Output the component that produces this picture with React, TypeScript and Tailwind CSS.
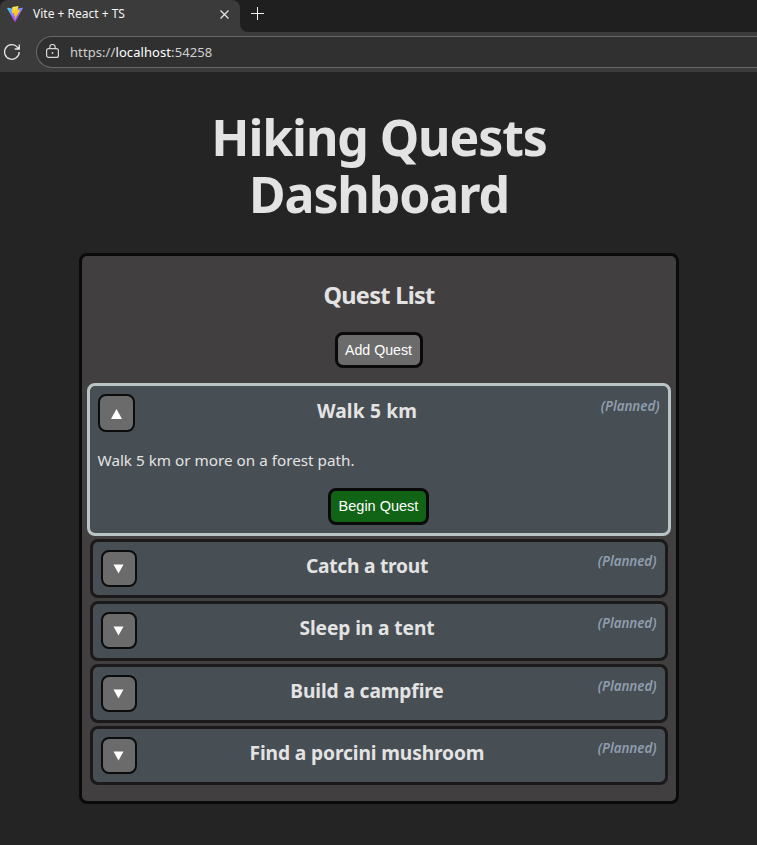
import React from "react";

const quests = [
  { title: "Catch a trout", style: "tracking-[-0.25px]", height: "h-[59px]" },
  { title: "Sleep in a tent", style: "tracking-[-0.1px]", height: "h-[60px]" },
  { title: "Build a campfire", style: "tracking-[-0.12px]", height: "h-[59px]" },
  { title: "Find a porcini mushroom", style: "tracking-[-0.12px]", height: "h-[59px]" },
];

function ViteLogo() {
  return (
    <svg className="ml-[7px] h-4 w-4 shrink-0" viewBox="0 0 32 32">
      <defs>
        <linearGradient id="shield" x1="0" y1="0" x2="0.6" y2="1">
          <stop offset="0" stopColor="#41d1ff" />
          <stop offset="1" stopColor="#bd34fe" />
        </linearGradient>
        <linearGradient id="bolt" x1="0.4" y1="0" x2="0.6" y2="1">
          <stop offset="0" stopColor="#ffea83" />
          <stop offset="0.1" stopColor="#ffdd35" />
          <stop offset="1" stopColor="#ffa800" />
        </linearGradient>
      </defs>
      <path fill="url(#shield)" d="M31.6 4.9 16.9 31.2a1 1 0 0 1-1.7 0L.4 4.9c-.4-.8.3-1.6 1.1-1.4L16 6.1l14.5-2.6c.8-.2 1.5.6 1.1 1.4Z" />
      <path fill="url(#bolt)" d="M22.4.2 11 2.200a.4.4 0 0 0-.4.4L10 14.400c0 .3.200.5.500.4l3.500-.7c.3 0 .5.200.5.500l-.9 4.300c-.1.3.2.5.5.4l2-.5c.3-.1.5.200.500.500l-1.600 7.600c-.1.400.5.600.7.300L26 8c.100-.300-.1-.6-.4-.600l-4.100.600c-.300 0-.5-.200-.4-.500l1.900-6.800c.1-.300-.2-.5-.6-.5Z" />
    </svg>
  );
}

function Toggle({ open = false }: { open?: boolean }) {
  return (
    <button
      className={
        open
          ? "flex h-[38px] w-[37px] items-center justify-center rounded-[8px] border-2 border-[#0c0c0c] bg-[#6b6b6b]"
          : "flex h-[37px] w-9 items-center justify-center rounded-[8px] border-2 border-[#0c0c0c] bg-[#6b6b6b]"
      }
    >
      <svg className="mt-px h-[10px] w-[11px]" viewBox="0 0 11 10">
        <path fill="#fff" d={open ? "M5.5 0 11 10H0Z" : "M.5 .5h10L5.500 9.500Z"} />
      </svg>
    </button>
  );
}

function Status() {
  return (
    <span className="w-[60px] text-right text-[13.4px] leading-[18px] font-semibold tracking-[-0.04px] whitespace-nowrap text-[#8f9dae] italic">
      (Planned)
    </span>
  );
}

export default function App() {
  return (
    <div className="flex h-[845px] w-full flex-col overflow-hidden bg-[#242424] font-['Noto_Sans',sans-serif] text-[#e3e3e3]">
      <header className="flex h-[72px] shrink-0 flex-col bg-[#3b3b3b]">
        <div className="flex h-8 bg-[#1f1f1f]">
          <div className="flex h-8 w-[240px] items-center rounded-t-lg bg-[#3b3b3b] pb-1 text-[12px] text-[#f4f4f4]">
            <ViteLogo />
            <span className="ml-[10px] whitespace-nowrap">Vite + React + TS</span>
            <svg className="mr-[11px] ml-auto h-[9px] w-[9px]" viewBox="0 0 9 9" fill="none" stroke="#e8e8e8" strokeWidth="1.2">
              <path d="m.5.5 8 8m0-8-8 8" />
            </svg>
          </div>
          <div className="h-8 flex-1 bg-[#3b3b3b]">
            <div className="flex h-8 items-start rounded-bl-lg bg-[#1f1f1f] pl-[11px]">
              <svg className="mt-[7px] h-[13px] w-[13px]" viewBox="0 0 13 13" stroke="#f0f0f0">
                <path d="M6.500 0v13M0 6.500h13" />
              </svg>
            </div>
          </div>
        </div>
        <div className="flex h-10 items-center pl-1">
          <svg className="h-4 w-4 shrink-0" viewBox="0 0 16 16" fill="none" stroke="#e8e8e8" strokeWidth="1.3">
            <path d="M15.200 8A7.300 7.300 0 1 1 13.500 3.300L15 5M15.300.5V5h-4.600" />
          </svg>
          <div className="ml-4 flex h-8 flex-1 items-center rounded-l-full border border-r-0 border-[#696969] bg-[#303030] pl-[9px]">
            <svg className="mb-[2px] h-[14px] w-[13px]" viewBox="0 0 13 14" fill="none" stroke="#d8d8d8" strokeWidth="1.200">
              <rect x=".6" y="4.600" width="11.800" height="8.800" rx="2" />
              <path d="M3.800 4.600V3.200a2.700 2.700 0 0 1 5.400 0v1.400" />
              <circle cx="6.500" cy="9" r=".9" fill="#d8d8d8" stroke="none" />
            </svg>
            <span className="ml-[11px] text-[13px] leading-5 tracking-[0.08px] text-[#cfcfcf]">
              https://<span className="text-white">localhost</span>:54258
            </span>
          </div>
        </div>
      </header>
      <main className="flex flex-col items-center">
        <h1 className="mt-[37px] ml-px h-[144px] w-[400px] text-center text-[50px] leading-[57px] font-bold tracking-[-1.12px]">
          Hiking Quests Dashboard
        </h1>
        <section className="flex h-[551px] w-[600px] flex-col items-center rounded-[8px] border-[3px] border-[#0a0a0a] bg-[#423f40]">
          <h2 className="mt-[23px] ml-px h-8 text-[23.500px] leading-8 font-bold tracking-[-0.7px] whitespace-nowrap">Quest List</h2>
          <button className="mt-[21px] flex h-9 w-[88px] items-center justify-center rounded-[8px] border-[3px] border-[#0a0a0a] bg-[#6b6b6b] pt-px font-['Liberation_Sans',sans-serif] text-[14.200px] whitespace-nowrap text-white">
            Add Quest
          </button>
          <article className="mt-[15px] flex h-[153px] w-[584px] shrink-0 flex-col rounded-[8px] border-[3px] border-[#b9c4c5] bg-[#474e54] px-2 pt-2">
            <div className="flex h-[38px] justify-between">
              <div className="w-9"><Toggle open /></div>
              <h3 className="mt-[3px] ml-px h-7 text-[19.200px] leading-7 font-bold tracking-[0.15px] whitespace-nowrap">Walk 5 km</h3>
              <div className="mt-[3px] flex"><Status /></div>
            </div>
            <p className="mt-[16px] h-6 text-[15.250px] leading-6 whitespace-nowrap">Walk 5 km or more on a forest path.</p>
            <button className="mt-[16px] flex h-[37px] w-[101px] items-center justify-center self-center rounded-[8px] border-[3px] border-[#0a0a0a] bg-[#116315] pt-px font-['Liberation_Sans',sans-serif] text-[14.500px] whitespace-nowrap text-white">
              Begin Quest
            </button>
          </article>
          <div className="mt-[3px] flex flex-col gap-[3px]">
            {quests.map((q) => (
              <article key={q.title} className={`${q.height} flex w-[578px] shrink-0 justify-between rounded-[8px] border-[3px] border-[#1b191a] bg-[#474e54] px-2 pt-2`}>
                <div className="w-9"><Toggle /></div>
                <h3 className={`${q.style} mt-[2px] ml-px h-7 text-[19.200px] leading-7 font-bold whitespace-nowrap`}>{q.title}</h3>
                <div className="mt-[2px] flex"><Status /></div>
              </article>
            ))}
          </div>
        </section>
      </main>
    </div>
  );
}
